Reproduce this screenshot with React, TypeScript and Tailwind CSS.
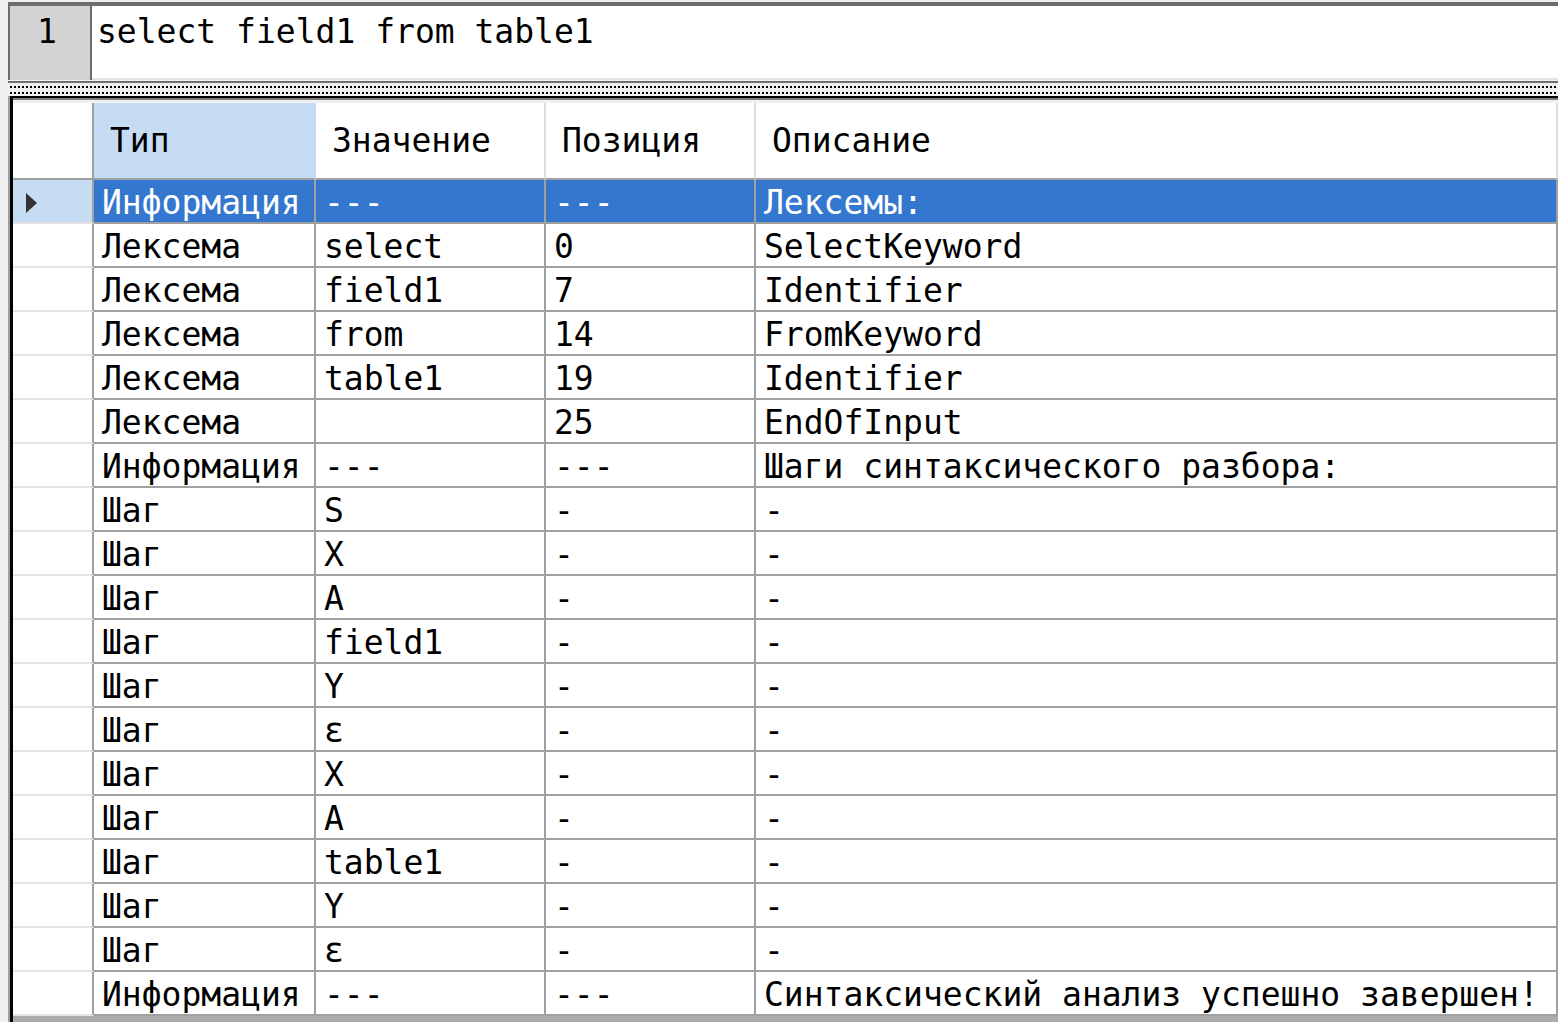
import React from "react";

type Row = [string, string, string, string];

const rows: Row[] = [
  ["Информация", "---", "---", "Лексемы:"],
  ["Лексема", "select", "0", "SelectKeyword"],
  ["Лексема", "field1", "7", "Identifier"],
  ["Лексема", "from", "14", "FromKeyword"],
  ["Лексема", "table1", "19", "Identifier"],
  ["Лексема", "", "25", "EndOfInput"],
  ["Информация", "---", "---", "Шаги синтаксического разбора:"],
  ["Шаг", "S", "-", "-"],
  ["Шаг", "X", "-", "-"],
  ["Шаг", "A", "-", "-"],
  ["Шаг", "field1", "-", "-"],
  ["Шаг", "Y", "-", "-"],
  ["Шаг", "ε", "-", "-"],
  ["Шаг", "X", "-", "-"],
  ["Шаг", "A", "-", "-"],
  ["Шаг", "table1", "-", "-"],
  ["Шаг", "Y", "-", "-"],
  ["Шаг", "ε", "-", "-"],
  ["Информация", "---", "---", "Синтаксический анализ успешно завершен!"],
];

const colWidths = ["w-[222px]", "w-[230px]", "w-[210px]", "w-[802px]"];

function Dots() {
  return (
    <div className="h-[2px] ml-[2px] bg-[image:repeating-linear-gradient(90deg,#000_0px,#000_2px,transparent_2px,transparent_4px)]" />
  );
}

function RowArrow() {
  return (
    <svg width="13" height="22" viewBox="0 0 13 22" className="ml-[12px] mt-[3px]">
      <path d="M1 1 L12 11 L1 21 Z" fill="#333333" />
    </svg>
  );
}

export default function App() {
  const headers = ["Тип", "Значение", "Позиция", "Описание"];

  return (
    <div
      className="w-[1558px] h-[1022px] overflow-hidden bg-[#f0f0f0] flex flex-col text-[33px] text-black"
      style={{ fontFamily: '"DejaVu Sans Mono", "Liberation Mono", monospace' }}
    >
      {/* Editor */}
      <div className="ml-[8px] mt-[2px] flex border-t-4 border-l-2 border-[#6e6e6e]">
        <div className="w-[82px] h-[74px] bg-[#d3d3d3] border-r-2 border-[#6e6e6e] pt-[7px] pl-[27px] leading-[38px]">
          1
        </div>
        <div className="flex-1 h-[74px] bg-white border-b-2 border-[#e3e3e3] pt-[7px] pl-[5px] leading-[38px] whitespace-pre">
          select field1 from table1
        </div>
      </div>

      {/* Splitter */}
      <div className="ml-[8px] h-[16px] flex flex-col">
        <div className="mt-[1px] h-[2px] bg-[#6e6e6e]" />
        <div className="mt-[3px]">
          <Dots />
        </div>
        <div className="mt-[4px]">
          <Dots />
        </div>
      </div>

      {/* Grid */}
      <div className="ml-[8px] flex-1 flex flex-col border-l-2 border-[#a0a0a0] min-h-0">
        <div className="flex-1 flex flex-col border-l-[3px] border-t-2 border-black min-h-0">
          <div className="h-[2px] bg-[#7a7a7a]" />
          <div className="flex bg-[#f0f0f0] pt-[3px]">
            <div className="w-[81px] h-[77px] bg-white border-r-2 border-b-2 border-[#a0a0a0]" />
            {headers.map((h, i) => (
              <div
                key={h}
                className={`${colWidths[i]} h-[77px] flex items-center pl-[16px] border-b-2 border-b-[#a0a0a0] border-r-2 ${
                  i === 0 ? "bg-[#c5dcf3] border-r-[#c5dcf3]" : "bg-white border-r-[#dcdcdc]"
                }`}
              >
                {h}
              </div>
            ))}
          </div>

          <div className="flex-1 bg-[#ababab] min-h-0 overflow-hidden">
            {rows.map((r, ri) => {
              const selected = ri === 0;
              return (
                <div key={ri} className="flex h-[44px]">
                  <div
                    className={`w-[81px] h-[44px] flex items-center border-r-2 border-r-[#a0a0a0] border-b-2 border-b-[#e3e3e3] ${
                      selected ? "bg-[#c5dcf3]" : "bg-white"
                    }`}
                  >
                    {selected && <RowArrow />}
                  </div>
                  {r.map((c, ci) => (
                    <div
                      key={ci}
                      className={`${colWidths[ci]} h-[44px] flex items-center pl-[8px] pt-[4px] border-r-2 border-b-2 border-[#a0a0a0] whitespace-pre overflow-hidden ${
                        selected ? "bg-[#3477cf] text-white" : "bg-white"
                      }`}
                    >
                      {c}
                    </div>
                  ))}
                </div>
              );
            })}
          </div>
        </div>
      </div>
    </div>
  );
}
